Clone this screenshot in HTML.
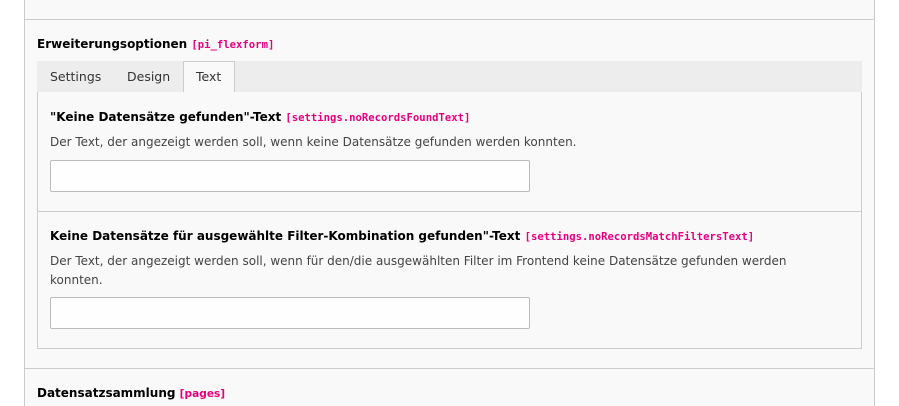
<!DOCTYPE html>
<html><head><style>
*{box-sizing:border-box;margin:0;padding:0}
html,body{width:899px;height:406px;overflow:hidden}
body{background:#fff;font-family:"DejaVu Sans",Verdana,sans-serif;font-size:12px;color:#333;position:relative}
.a{position:absolute}
.panel{left:24px;top:-1px;width:851px;height:420px;background:#f9f9f9;border:1px solid #ccc;border-top:none}
.hr{left:24px;width:851px;height:1px;background:#ccc}
.lbl{font-weight:bold;color:#000;font-size:12px;white-space:nowrap}
.code{font-family:"DejaVu Sans Mono","Liberation Mono",monospace;color:#e6007e;font-size:10.6px;font-weight:bold}
.tabs{left:37px;top:61px;width:825px;height:32px;background:#ededed;border-bottom:1px solid #ccc}
.tab{top:61px;height:32px;line-height:31px;font-size:12.5px;color:#333}
.box{left:37px;top:92px;width:825px;height:257px;border:1px solid #ccc;border-top:none;background:#f9f9f9}
.inp{left:50px;width:480px;height:32px;background:#fefefe;border:1px solid #bbb;border-radius:2px}
.desc{font-size:12px;color:#444;line-height:19px;white-space:nowrap}
</style></head><body>
<div class="a panel"></div>
<div class="a hr" style="top:19px"></div>
<div class="a lbl" style="left:37px;top:37px">Erweiterungsoptionen <span class="code">[pi_flexform]</span></div>
<div class="a tabs"></div>
<div class="a tab" style="left:50px">Settings</div>
<div class="a tab" style="left:127px">Design</div>
<div class="a" style="left:183px;top:61px;width:52px;height:33px;background:#f9f9f9;border:1px solid #ccc;border-bottom:none"></div>
<div class="a tab" style="left:196px">Text</div>
<div class="a box"></div>
<div class="a lbl" style="left:50px;top:110px">"Keine Datensätze gefunden"-Text <span class="code">[settings.noRecordsFoundText]</span></div>
<div class="a desc" style="left:50px;top:133px">Der Text, der angezeigt werden soll, wenn keine Datensätze gefunden werden konnten.</div>
<div class="a inp" style="top:160px"></div>
<div class="a" style="left:38px;top:211px;width:823px;height:1px;background:#ccc"></div>
<div class="a lbl" style="left:50px;top:229px">Keine Datensätze für ausgewählte Filter-Kombination gefunden"-Text <span class="code">[settings.noRecordsMatchFiltersText]</span></div>
<div class="a desc" style="left:50px;top:252px">Der Text, der angezeigt werden soll, wenn für den/die ausgewählten Filter im Frontend keine Datensätze gefunden werden<br>konnten.</div>
<div class="a inp" style="top:297px"></div>
<div class="a hr" style="top:368px"></div>
<div class="a lbl" style="left:37px;top:386px">Datensatzsammlung <span class="code" style="font-family:'DejaVu Sans',sans-serif;font-size:10.6px">[pages]</span></div>
</body></html>
